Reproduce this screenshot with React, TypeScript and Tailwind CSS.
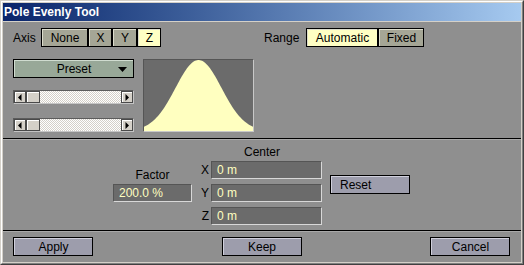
const FONT = "font-['Liberation_Sans',Arial,sans-serif]"

// bell curve drawn into the 109x71 graph area
const CURVE = (() => {
  const w = 109
  const h = 71
  const sigma = 23
  const pts: string[] = [`0,${h}`]
  for (let x = 0; x <= w; x += 1) {
    const y = h - h * Math.exp(-((x - w / 2) ** 2) / (2 * sigma * sigma))
    pts.push(`${x},${y.toFixed(2)}`)
  }
  pts.push(`${w},${h}`)
  return pts.join(' ')
})()

function ToggleButton({ label, width, active = false }: { label: string; width: string; active?: boolean }) {
  return (
    <div className={`h-[19px] ${width} border border-black`}>
      <div
        className={`flex h-full items-center justify-center border-t border-l border-t-[#dcdccc] border-l-[#dcdccc] text-[12px] text-black ${
          active ? 'bg-[#ffffc4]' : 'bg-[#a5a696]'
        }`}
      >
        {label}
      </div>
    </div>
  )
}

function PushButton({ label, left = false }: { label: string; left?: boolean }) {
  return (
    <div className="h-[19px] w-[80px] border border-black">
      <div
        className={`flex h-full items-center border-t border-l border-t-[#d0d0dc] border-l-[#d0d0dc] bg-[#9d9dac] text-[12px] text-black ${
          left ? 'justify-start pl-[8px]' : 'justify-center'
        }`}
      >
        {label}
      </div>
    </div>
  )
}

function Arrow({ dir }: { dir: 'left' | 'right' }) {
  return (
    <div className="flex h-full w-[12px] items-center justify-center border border-[#4a4a4a] bg-[#d4d0c8] shadow-[inset_1px_1px_0_#ffffff]">
      <svg width="4" height="7" viewBox="0 0 4 7">
        <path d={dir === 'left' ? 'M3.5 0 L0 3.5 L3.5 7 Z' : 'M0.5 0 L4 3.5 L0.5 7 Z'} fill="#000" />
      </svg>
    </div>
  )
}

function ScrollBar() {
  return (
    <div className="flex h-[14px] w-[121px] border border-t-[#5c5c5c] border-l-[#5c5c5c] border-b-[#c4c4c4] border-r-[#c4c4c4]">
      <Arrow dir="left" />
      <div className="h-full w-[14px] border border-[#4a4a4a] bg-[#d4d0c8] shadow-[inset_1px_1px_0_#ffffff]" />
      <div className="h-full flex-1 bg-[repeating-conic-gradient(#d4d0c8_0%_25%,#ffffff_0%_50%)] bg-[length:2px_2px]" />
      <Arrow dir="right" />
    </div>
  )
}

function Field({ value, width }: { value: string; width: string }) {
  return (
    <div
      className={`flex h-[18px] ${width} items-center border border-t-[#555555] border-l-[#555555] border-b-[#d8d8d8] border-r-[#d8d8d8] bg-[#6b6b6b] pl-[5px] text-[12px] text-[#ffffc0]`}
    >
      {value}
    </div>
  )
}

function Separator() {
  return (
    <div>
      <div className="h-[1px] bg-black" />
      <div className="h-[1px] bg-[#a9a9a9]" />
    </div>
  )
}

export default function App() {
  return (
    <div className={`h-[265px] w-[524px] ${FONT}`}>
      <div className="h-full w-full border border-t-[#d4d0c8] border-l-[#d4d0c8] border-b-[#404040] border-r-[#404040] bg-[#d4d0c8]">
        <div className="flex h-full w-full flex-col border border-t-white border-l-white border-b-[#808080] border-r-[#808080] p-[1px]">
          {/* title bar */}
          <div className="flex h-[18px] items-center bg-gradient-to-r from-[#0a246a] to-[#a6caf0] pl-[1px] text-[12px] font-bold text-white">
            Pole Evenly Tool
          </div>
          <div className="mt-[1px] flex flex-1 flex-col bg-[#8f8f8f]">
            {/* options */}
            <div className="h-[116px] pl-[10px] pt-[6px]">
              <div className="flex h-[19px] items-center">
                <div className="w-[28px] text-[12px] text-black">Axis</div>
                <ToggleButton label="None" width="w-[47px]" />
                <ToggleButton label="X" width="w-[24px]" />
                <ToggleButton label="Y" width="w-[25px]" />
                <ToggleButton label="Z" width="w-[24px]" active />
                <div className="ml-[103px] w-[42px] text-[12px] text-black">Range</div>
                <ToggleButton label="Automatic" width="w-[72px]" active />
                <ToggleButton label="Fixed" width="w-[46px]" />
              </div>
              <div className="mt-[12px] flex">
                <div className="flex w-[121px] flex-col">
                  <div className="h-[19px] w-[121px] border border-black">
                    <div className="relative flex h-full items-center justify-center border-t border-l border-t-[#d0dcd0] border-l-[#d0dcd0] bg-[#98a898] text-[12px] text-black">
                      Preset
                      <svg className="absolute right-[6px] top-[6px]" width="9" height="5" viewBox="0 0 9 5">
                        <path d="M0 0 H9 L4.5 5 Z" fill="#000" />
                      </svg>
                    </div>
                  </div>
                  <div className="mt-[12px]">
                    <ScrollBar />
                  </div>
                  <div className="mt-[14px]">
                    <ScrollBar />
                  </div>
                </div>
                <div className="ml-[9px] h-[73px] w-[111px] border border-t-[#555555] border-l-[#555555] border-b-[#c8c8c8] border-r-[#c8c8c8] bg-[#6b6b6b]">
                  <svg width="109" height="71" viewBox="0 0 109 71" className="block">
                    <polygon points={CURVE} fill="#ffffc0" />
                  </svg>
                </div>
              </div>
            </div>
            <Separator />
            {/* factor and center */}
            <div className="flex h-[90px] items-start pl-[110px]">
              <div className="flex w-[79px] flex-col">
                <div className="mt-[28px] h-[14px] text-center text-[12px] leading-[14px] text-black">Factor</div>
                <div className="mt-[2px]">
                  <Field value="200.0 %" width="w-[79px]" />
                </div>
              </div>
              <div className="ml-[7px] flex flex-col">
                <div className="mt-[5px] h-[14px] pl-[3px] text-center text-[12px] leading-[14px] text-black">Center</div>
                <div className="mt-[2px] flex flex-col gap-[5px]">
                  {['X', 'Y', 'Z'].map((axis) => (
                    <div key={axis} className="flex items-center">
                      <div className="w-[12px] pr-[2px] text-right text-[12px] text-black">{axis}</div>
                      <Field value="0 m" width="w-[111px]" />
                    </div>
                  ))}
                </div>
              </div>
              <div className="ml-[8px] mt-[35px]">
                <PushButton label="Reset" left />
              </div>
            </div>
            <Separator />
            {/* actions */}
            <div className="flex flex-1 justify-between pl-[10px] pr-[11px] pt-[5px]">
              <PushButton label="Apply" />
              <PushButton label="Keep" />
              <PushButton label="Cancel" />
            </div>
          </div>
        </div>
      </div>
    </div>
  )
}
